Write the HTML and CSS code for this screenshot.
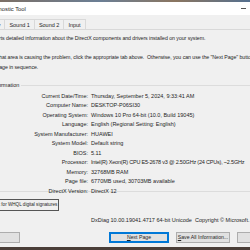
FILE: index.html
```html
<!DOCTYPE html>
<html lang="en">
<head>
    <meta charset="UTF-8">
    <title>DirectX Diagnostic Tool</title>
    <link rel="stylesheet" href="styles.css">
</head>
<body>
    <div class="desktop-top"></div>
    <div class="window">
        <div class="titlebar">
            <span class="title">DirectX Diagnostic Tool</span>
            <div class="window-controls">
                <span class="ctl ctl-min"></span>
                <span class="ctl"></span>
                <span class="ctl"></span>
            </div>
        </div>

        <div class="tabs">
            <div class="tab active">System</div>
            <div class="tab">Display</div>
            <div class="tab">Sound 1</div>
            <div class="tab">Sound 2</div>
            <div class="tab">Input</div>
        </div>

        <div class="panel">
            <p class="intro">This tool reports detailed information about the DirectX components and drivers installed on your system.</p>
            <p class="intro">If you know what area is causing the problem, click the appropriate tab above.&nbsp; Otherwise, you can use the "Next Page" button below to visit each page in sequence.</p>

            <fieldset class="group">
                <legend>System Information</legend>
                <div class="info">
                    <span class="label">Current Date/Time:</span><span class="value">Thursday, September 5, 2024, 9:33:41 AM</span>
                    <span class="label">Computer Name:</span><span class="value">DESKTOP-P06SI30</span>
                    <span class="label">Operating System:</span><span class="value">Windows 10 Pro 64-bit (10.0, Build 19045)</span>
                    <span class="label">Language:</span><span class="value">English (Regional Setting: English)</span>
                    <span class="label">System Manufacturer:</span><span class="value">HUAWEI</span>
                    <span class="label">System Model:</span><span class="value">Default string</span>
                    <span class="label">BIOS:</span><span class="value">5.11</span>
                    <span class="label">Processor:</span><span class="value value-tight">Intel(R) Xeon(R) CPU E5-2678 v3 @ 2.50GHz (24 CPUs), ~2.5GHz</span>
                    <span class="label">Memory:</span><span class="value">32768MB RAM</span>
                    <span class="label">Page file:</span><span class="value">6770MB used, 30703MB available</span>
                    <span class="label">DirectX Version:</span><span class="value">DirectX 12</span>
                </div>
            </fieldset>

            <label class="check">
                <span class="box"></span>
                <span class="check-text">Check for WHQL digital signatures</span>
            </label>

            <div class="version">DxDiag 10.00.19041.4717 64-bit Unicode&nbsp; Copyright © Microsoft. All rights reserved.</div>
        </div>

        <div class="buttons">
            <button class="btn btn-help">Help</button>
            <div class="buttons-right">
                <button class="btn btn-default"><u>N</u>ext Page</button>
                <button class="btn btn-save"><u>S</u>ave All Information...</button>
                <button class="btn">E<u>x</u>it</button>
            </div>
        </div>
    </div>
    <div class="desktop-bottom"></div>
</body>
</html>
```

FILE: styles.css
```css
* {
    margin: 0;
    padding: 0;
    box-sizing: border-box;
}

body {
    width: 250px;
    height: 250px;
    overflow: hidden;
    background: #3a3432;
    font-family: Tahoma, 'Liberation Sans', 'DejaVu Sans', sans-serif;
    font-size: 5.5px;
    color: #1e1e1e;
}

.desktop-top {
    height: 2px;
    background: linear-gradient(90deg, #7c6f66, #6b7f95 40%, #8a7560 70%, #55708f);
}

/* the window is wider than the frame and sits partly off its left edge */
.window {
    width: 341px;
    height: 245px;
    margin-left: -40px;
    background: #f0f0f0;
    display: flex;
    flex-direction: column;
}

.titlebar {
    height: 13px;
    background: #fff;
    display: flex;
    align-items: center;
    padding-left: 6px;
}

.title {
    font-size: 5.8px;
    flex: 1;
}

.window-controls {
    display: flex;
    height: 100%;
}

.ctl {
    width: 23px;
    height: 100%;
    display: flex;
    align-items: center;
    justify-content: center;
}

.ctl-min::before {
    content: '';
    width: 5px;
    height: 1px;
    background: #555;
}

.tabs {
    display: flex;
    margin-top: 4px;
    margin-left: -10px;
    height: 11px;
    border-bottom: 1px solid #d9d9d9;
}

.tab {
    padding: 0 4px;
    line-height: 10px;
    border: 1px solid #d9d9d9;
    border-bottom: none;
    border-left: none;
    background: #f0f0f0;
}

.tab:first-child {
    border-left: 1px solid #d9d9d9;
}

.tab.active {
    background: #fff;
}

.panel {
    padding: 4px 6px 0 8px;
    line-height: 9.5px;
}

.intro {
    font-size: 5.25px;
    letter-spacing: -0.06px;
    margin-bottom: 9.5px;
    margin-right: 22px;
}

.group {
    border: none;
    border-top: 1px solid #dcdcdc;
    border-bottom: 1px solid #dcdcdc;
    margin-top: -0.5px;
    padding: 1px 0 4px;
    height: 111px;
}

.group legend {
    padding: 0 2px;
    margin-left: 2px;
}

.info {
    display: grid;
    grid-template-columns: 120px 1fr;
    column-gap: 3px;
    line-height: 9.5px;
}

.label {
    text-align: right;
}

.value {
    white-space: nowrap;
}

.value-tight {
    letter-spacing: -0.2px;
}

.check {
    display: flex;
    align-items: center;
    gap: 3px;
    margin-top: 7px;
    margin-left: 8px;
}

.box {
    width: 6px;
    height: 6px;
    border: 1px solid #333;
    background: #fff;
}

.check-text {
    font-size: 4.6px;
    border: 1px solid #555;
    padding: 1px 1px;
    line-height: 8px;
}

.version {
    margin-top: 5px;
    padding-left: 123px;
    white-space: nowrap;
}

.buttons {
    display: flex;
    justify-content: space-between;
    margin-top: 6px;
    padding: 0 4px 0 4px;
}

.buttons-right {
    display: flex;
    gap: 7px;
}

.btn {
    width: 60px;
    height: 11px;
    padding: 0;
    border: 1px solid #adadad;
    background: #e1e1e1;
    font-family: inherit;
    font-size: 5.2px;
    color: #1e1e1e;
    white-space: nowrap;
    overflow: hidden;
}

.btn-help {
    width: 56px;
}

.btn-save {
    width: 54px;
}

.btn-default {
    border-color: #0078d7;
    box-shadow: inset 0 0 0 1px #0078d7;
}

.desktop-bottom {
    height: 3px;
    background: #4a3e38;
}
```
